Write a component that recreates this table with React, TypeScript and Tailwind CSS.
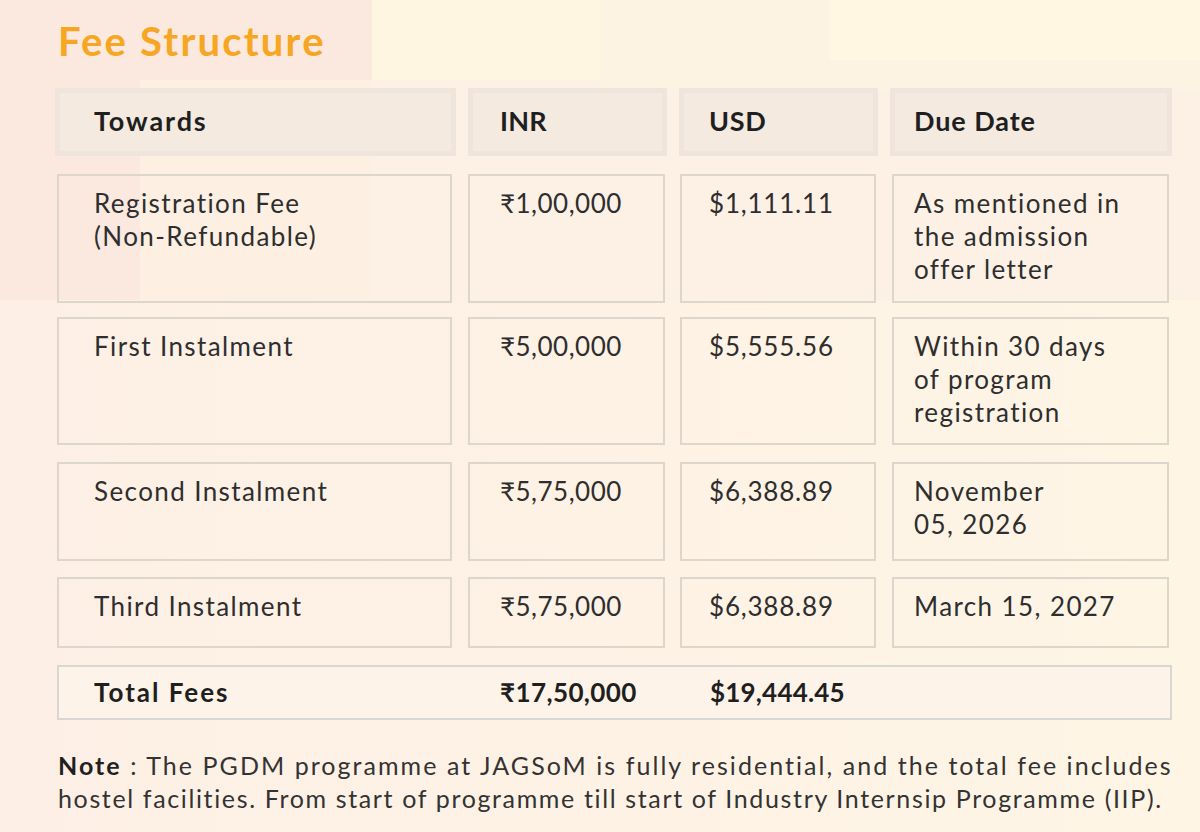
import React from "react";

const font = { fontFamily: '"Lato", "Noto Sans", "DejaVu Sans", sans-serif' };

type Row = { towards: string[]; inr: string; usd: string; due: string[]; h: string };

const rows: Row[] = [
  { towards: ["Registration Fee", "(Non-Refundable)"], inr: "₹1,00,000", usd: "$1,111.11", due: ["As mentioned in", "the admission", "offer letter"], h: "h-[129px]" },
  { towards: ["First Instalment"], inr: "₹5,00,000", usd: "$5,555.56", due: ["Within 30 days", "of program", "registration"], h: "h-[128px]" },
  { towards: ["Second Instalment"], inr: "₹5,75,000", usd: "$6,388.89", due: ["November", "05, 2026"], h: "h-[99px]" },
  { towards: ["Third Instalment"], inr: "₹5,75,000", usd: "$6,388.89", due: ["March 15, 2027"], h: "h-[71px]" },
];

const rowMt = ["mt-[18px]", "mt-[14px]", "mt-[17px]", "mt-[16px]"];

function Lines({ lines }: { lines: string[] }) {
  return (
    <>
      {lines.map((l, i) => (
        <div key={i} className="whitespace-nowrap">{l}</div>
      ))}
    </>
  );
}

export default function App() {
  return (
    <div className="relative w-[1200px] h-[832px] overflow-hidden bg-[#fdf1e6]" style={font}>
      <div className="absolute left-0 top-0 w-[372px] h-[300px] bg-[#fbe8df]" />
      <div className="absolute left-[140px] top-[80px] w-[232px] h-[240px] bg-[#fdf0e3]" />
      <div className="absolute left-[372px] top-0 w-[228px] h-[80px] bg-[#fff6e1]" />
      <div className="absolute left-[600px] top-0 w-[600px] h-[90px] bg-[#fdf3e3]" />
      <div className="absolute left-[830px] top-0 w-[370px] h-[60px] bg-[#fff7e2]" />
      <div className="absolute left-0 top-[300px] w-[1200px] h-[532px] bg-gradient-to-r from-[#fdefe5] to-[#fef5e5]" />

      <div className="relative pl-[55px] pr-[27px]">
        <h1 className="pl-[3px] pt-[17px] h-[88px] text-[40px] leading-[48px] font-bold tracking-[2.2px] text-[#f7a621]">
          Fee Structure
        </h1>

        <div className="grid grid-cols-[401px_199px_199px_282px] gap-x-[12px] text-[27px] font-bold text-[#1f1f1f]">
          {[
            ["Towards", "pl-[34px] tracking-[1.9px]"],
            ["INR", "pl-[27px] tracking-[0.2px]"],
            ["USD", "pl-[25px] tracking-[0.7px]"],
            ["Due Date", "pl-[19px] tracking-[0.9px]"],
          ].map(([t, p]) => (
            <div key={t} className={`h-[68px] border-[5px] border-[#efe5dd] bg-[#f4eadf] flex items-center pb-[1px] ${p}`}>
              {t}
            </div>
          ))}
        </div>

        {rows.map((r, i) => (
          <div
            key={i}
            className={`grid grid-cols-[401px_199px_199px_282px] gap-x-[12px] text-[26px] leading-[33px] text-[#2e2e2e] ${rowMt[i]}`}
          >
            <div className={`${r.h} ml-[2px] mr-[4px] border-2 border-[#ddd6cd] pt-[11px] pl-[35px] tracking-[1.4px]`}>
              <Lines lines={r.towards} />
            </div>
            <div className={`${r.h} mr-[2px] border-2 border-[#ddd6cd] pt-[11px] pl-[30px] tracking-[0.5px]`}>{r.inr}</div>
            <div className={`${r.h} ml-[1px] mr-[2px] border-2 border-[#ddd6cd] pt-[11px] pl-[27px] tracking-[0.8px]`}>{r.usd}</div>
            <div className={`${r.h} ml-[2px] mr-[3px] border-2 border-[#ddd6cd] pt-[11px] pl-[20px] tracking-[1.4px]`}>
              <Lines lines={r.due} />
            </div>
          </div>
        ))}

        <div className="mt-[17px] ml-[2px] mr-[1px] h-[55px] border-2 border-[#d9d7d3] bg-[#fdf3e8] flex items-center text-[26px] font-bold text-[#1f1f1f]">
          <div className="w-[441px] pl-[35px] tracking-[2px]">Total Fees</div>
          <div className="w-[210px] tracking-[0.4px]">₹17,50,000</div>
          <div className="tracking-[0.2px]">$19,444.45</div>
        </div>

        <div className="mt-[29px] pl-[3px] text-[25px] leading-[33px] text-[#333333]">
          <div className="whitespace-nowrap tracking-[2.05px]">
            <span className="font-bold text-[#1f1f1f]">Note</span> : The PGDM programme at JAGSoM is fully residential, and the total fee includes
          </div>
          <div className="whitespace-nowrap tracking-[1.64px]">
            hostel facilities. From start of programme till start of Industry Internsip Programme (IIP).
          </div>
        </div>
      </div>
    </div>
  );
}
